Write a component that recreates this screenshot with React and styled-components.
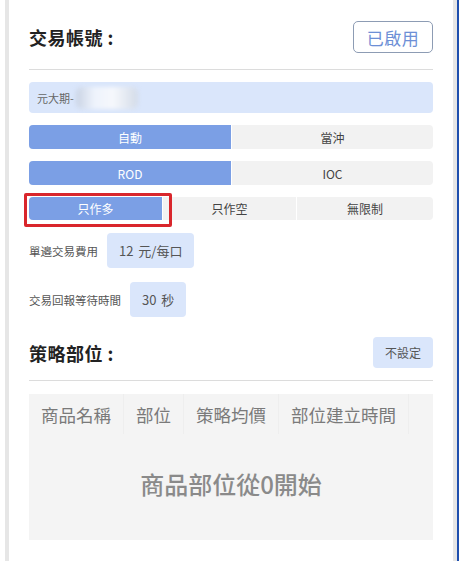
import styled, { createGlobalStyle } from "styled-components";

const GlobalStyle = createGlobalStyle`
  html, body {
    margin: 0;
    padding: 0;
    background: #ffffff;
    font-family: "Noto Sans CJK TC", "Noto Sans", sans-serif;
  }
`;

const colors = {
  blue: "#7b9fe5",
  paleBlue: "#dae6fb",
  grey: "#f2f2f2",
  text: "#222222",
  label: "#555555",
};

export default function App() {
  return (
    <>
      <GlobalStyle />
      <Frame>
        <Panel>
          <Header>
            <Title>交易帳號 :</Title>
            <OutlineButton>已啟用</OutlineButton>
          </Header>
          <Divider />

          <AccountField>
            <span>元大期-</span>
            <Blur />
          </AccountField>

          <Segment>
            <SegItem $active>自動</SegItem>
            <SegItem>當沖</SegItem>
          </Segment>
          <Segment>
            <SegItem $active>ROD</SegItem>
            <SegItem>IOC</SegItem>
          </Segment>
          <Segment $three>
            <SegItem $active $marked>只作多</SegItem>
            <SegItem>只作空</SegItem>
            <SegItem>無限制</SegItem>
          </Segment>

          <FieldRow>
            <Label>單邉交易費用</Label>
            <Pill>12 元/每口</Pill>
          </FieldRow>
          <FieldRow>
            <Label>交易回報等待時間</Label>
            <Pill>30 秒</Pill>
          </FieldRow>

          <Header $second>
            <Title>策略部位 :</Title>
            <FlatButton>不設定</FlatButton>
          </Header>
          <Divider $tight />

          <Table>
            <HeadRow>
              <HeadCell>商品名稱</HeadCell>
              <HeadCell>部位</HeadCell>
              <HeadCell>策略均價</HeadCell>
              <HeadCell>部位建立時間</HeadCell>
              <HeadCell $rest />
            </HeadRow>
            <Empty>商品部位從0開始</Empty>
          </Table>
        </Panel>
        <Edge />
      </Frame>
    </>
  );
}

const Frame = styled.div`
  display: flex;
  height: 561px;
  padding-left: 5px;
  box-sizing: border-box;
  overflow: hidden;
`;

const Panel = styled.div`
  flex: 1;
  border-left: 4px solid #e6e6e6;
  border-right: 4px solid #e6e6e6;
  padding: 21px 20px 0 20px;
  display: flex;
  flex-direction: column;
  background: #ffffff;
`;

const Edge = styled.div`
  width: 3px;
  background: #1f4fae;
`;

const Header = styled.div`
  display: flex;
  justify-content: space-between;
  align-items: center;
  height: ${(p) => (p.$second ? "31px" : "32px")};
  margin-top: ${(p) => (p.$second ? "20px" : "0")};
`;

const Title = styled.h2`
  margin: 0;
  font-size: 18px;
  font-weight: 600;
  color: ${colors.text};
  letter-spacing: 0.5px;
`;

const OutlineButton = styled.button`
  width: 80px;
  height: 32px;
  border: 1px solid #8d9cb4;
  border-radius: 5px;
  background: #ffffff;
  color: #6d8fd6;
  font-family: inherit;
  font-size: 17px;
  letter-spacing: 0.5px;
  padding: 0;
`;

const FlatButton = styled.button`
  width: 60px;
  height: 31px;
  border: none;
  border-radius: 4px;
  background: ${colors.paleBlue};
  color: ${colors.label};
  font-family: inherit;
  font-size: 12px;
  padding: 0;
`;

const Divider = styled.hr`
  margin: ${(p) => (p.$tight ? "12px" : "16px")} 0 0;
  border: none;
  border-top: 1px solid #dcdcdc;
`;

const AccountField = styled.div`
  margin-top: 12px;
  height: 31px;
  border-radius: 4px;
  background: ${colors.paleBlue};
  display: flex;
  align-items: center;
  padding-left: 8px;
  font-size: 11px;
  color: #666666;
`;

const Blur = styled.div`
  width: 62px;
  height: 22px;
  margin-left: 2px;
  border-radius: 6px;
  background: linear-gradient(90deg, #c9d3e4 0%, #eef3fc 30%, #f6f8fc 60%, #d3dbe8 100%);
  filter: blur(2px);
`;

const Segment = styled.div`
  display: grid;
  grid-template-columns: ${(p) => (p.$three ? "133px 134px 1fr" : "1fr 1fr")};
  height: ${(p) => (p.$three ? "23px" : "24px")};
  margin-top: 12px;
  border-radius: 4px;
  background: ${colors.grey};
`;

const SegItem = styled.div`
  position: relative;
  display: flex;
  align-items: center;
  justify-content: center;
  font-size: 12px;
  color: ${(p) => (p.$active ? "#ffffff" : "#444444")};
  background: ${(p) => (p.$active ? colors.blue : "transparent")};
  border-radius: ${(p) => (p.$active ? "4px 0 0 4px" : "0")};
  border-left: ${(p) => (p.$active ? "none" : "1px solid #ffffff")};

  &::after {
    content: "";
    display: ${(p) => (p.$marked ? "block" : "none")};
    position: absolute;
    left: -5px;
    top: -4px;
    right: -10px;
    bottom: -7px;
    border: 3px solid #d9262c;
    border-radius: 2px;
  }
`;

const FieldRow = styled.div`
  display: flex;
  align-items: center;
  gap: 9px;
  margin-top: 13px;
  & + & {
    margin-top: 14px;
  }
`;

const Label = styled.span`
  font-size: 11.5px;
  color: ${colors.label};
`;

const Pill = styled.div`
  height: 35px;
  padding: 0 12px;
  border-radius: 4px;
  background: ${colors.paleBlue};
  display: flex;
  align-items: center;
  font-size: 13px;
  color: ${colors.label};
  word-spacing: 2px;
`;

const Table = styled.div`
  margin-top: 13px;
  height: 146px;
  background: #f4f4f4;
  display: flex;
  flex-direction: column;
  overflow: hidden;
`;

const HeadRow = styled.div`
  display: flex;
  height: 40px;
`;

const HeadCell = styled.div`
  flex: ${(p) => (p.$rest ? "1" : "none")};
  padding: 0 12px;
  display: flex;
  align-items: center;
  font-size: 17.5px;
  color: #7a7a7a;
  border-right: ${(p) => (p.$rest ? "none" : "1px solid #eeeeee")};
  white-space: nowrap;
`;

const Empty = styled.div`
  flex: 1;
  display: flex;
  align-items: center;
  justify-content: center;
  padding-bottom: 8px;
  font-size: 24px;
  font-weight: 500;
  color: #8a8a8a;
`;
